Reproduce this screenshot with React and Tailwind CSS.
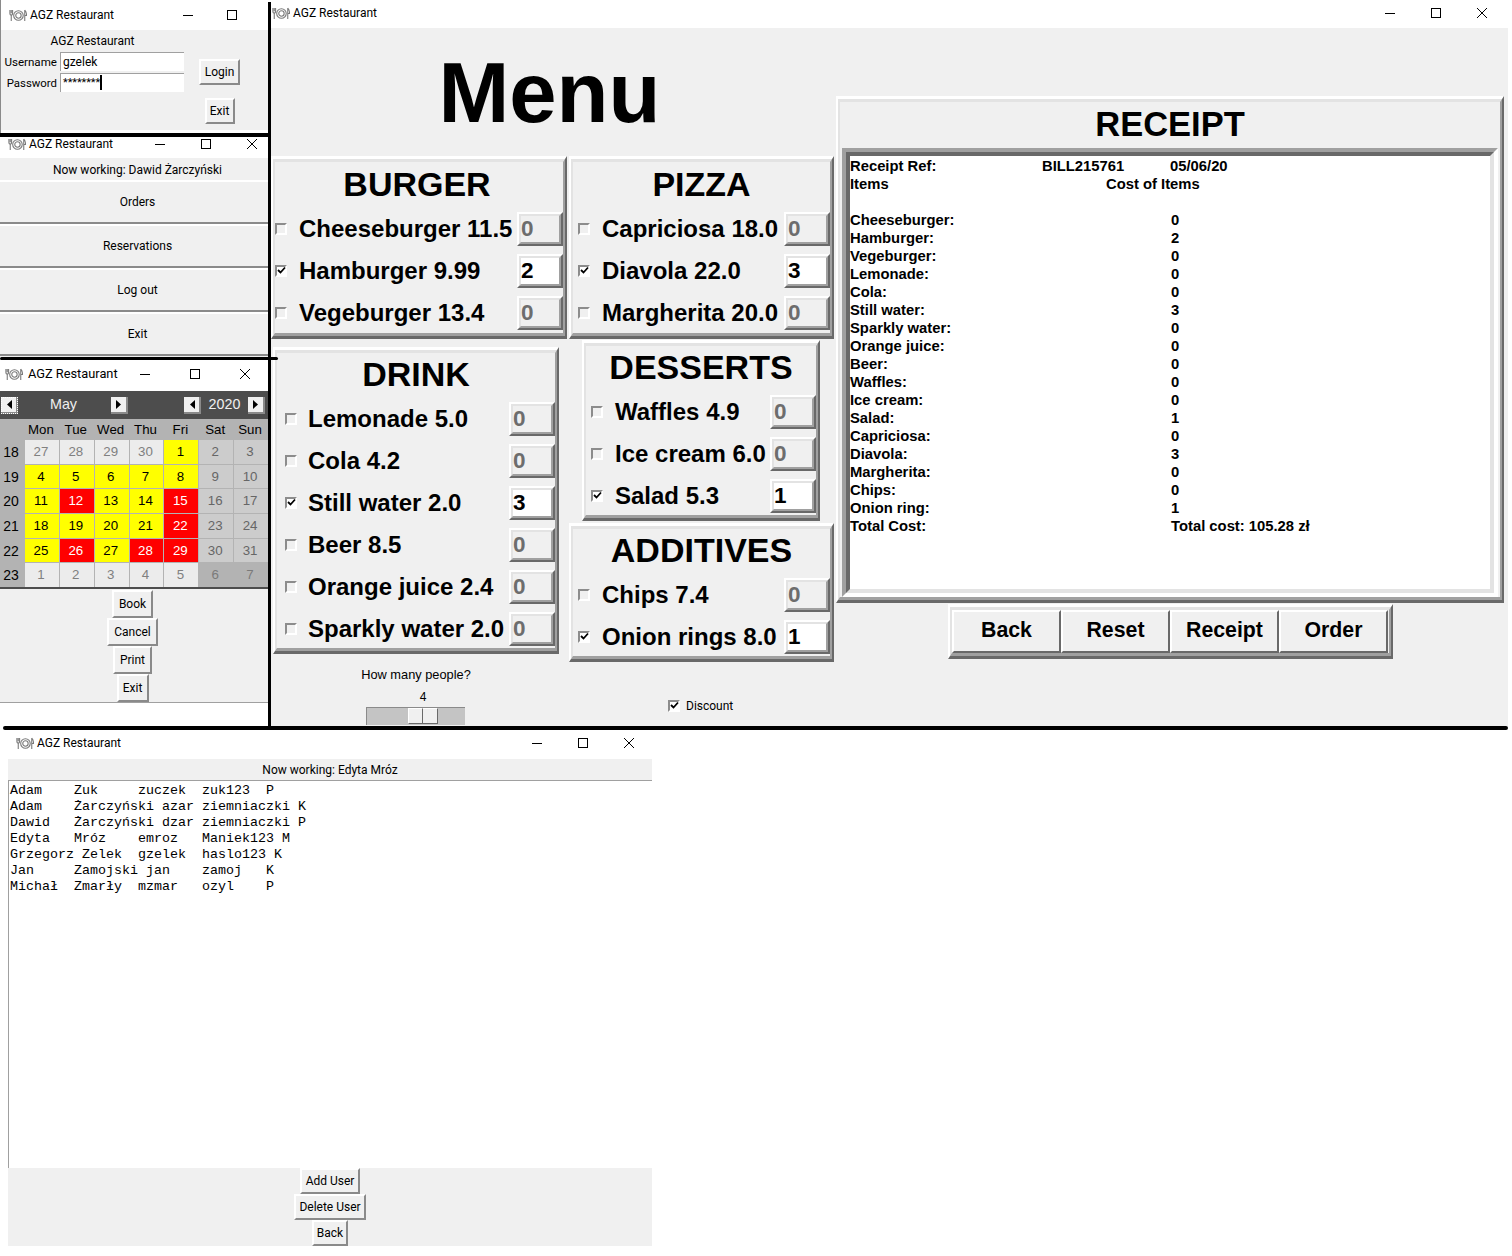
import React from 'react';

const arial = "font-['Liberation_Sans',Arial,sans-serif]";

const DishIcon = () => (
  <svg width="18" height="13" viewBox="0 0 20 14" fill="none" stroke="#7a7a7a" strokeWidth="1.2" className="shrink-0">
    <path d="M1 1v3.5q0 2 1.5 2V13M2.5 1v3.5M4 1v3.5q0 2-1.5 2" />
    <circle cx="10.5" cy="7" r="5.3" />
    <circle cx="10.5" cy="7" r="3" />
    <path d="M17.5 1v12M17.5 1q2 2 2 6h-2" />
  </svg>
);

const MinIcon = () => (
  <svg width="10" height="10" viewBox="0 0 10 10" stroke="#000" strokeWidth="1"><path d="M0 5.5h10" /></svg>
);
const MaxIcon = () => (
  <svg width="10" height="10" viewBox="0 0 10 10" fill="none" stroke="#000" strokeWidth="1"><rect x="0.5" y="0.5" width="9" height="9" /></svg>
);
const CloseIcon = () => (
  <svg width="10" height="10" viewBox="0 0 10 10" stroke="#000" strokeWidth="1"><path d="M0 0l10 10M10 0L0 10" /></svg>
);

const TitleBar = ({ className, controlsClass, btnClass, textClass = 'ml-[3px]' }) => (
  <div className={`flex items-center bg-white shrink-0 ${className}`}>
    <DishIcon />
    <span className={`whitespace-nowrap ${textClass}`}>AGZ Restaurant</span>
    <div className={`ml-auto flex shrink-0 ${controlsClass}`}>
      <div className={`flex justify-center shrink-0 ${btnClass}`}><MinIcon /></div>
      <div className={`flex justify-center shrink-0 ${btnClass}`}><MaxIcon /></div>
      <div className={`flex justify-center shrink-0 ${btnClass}`}><CloseIcon /></div>
    </div>
  </div>
);

const SmallBtn = ({ className, children }) => (
  <div className={`flex items-center justify-center bg-[#f0f0f0] border-2 border-t-white border-l-white border-r-[#8a8a8a] border-b-[#8a8a8a] shrink-0 ${className}`}>
    {children}
  </div>
);

// tk style raised border, two tones on each side
const Frame = ({ className, innerClass, children }) => (
  <div className={`border-x-2 border-y-[3px] border-t-white border-l-white border-r-[#696969] border-b-[#696969] ${className}`}>
    <div className={`border-x-2 border-y-[3px] border-t-[#e3e3e3] border-l-[#e3e3e3] border-r-[#a0a0a0] border-b-[#a0a0a0] bg-[#f0f0f0] ${innerClass}`}>
      {children}
    </div>
  </div>
);

const Check = ({ checked, className }) => (
  <div className={`w-[12px] h-[12px] mb-px shrink-0 border-2 border-t-[#8c8c8c] border-l-[#8c8c8c] border-r-white border-b-white flex items-center justify-center ${checked ? 'bg-white' : 'bg-[#f0f0f0]'} ${className}`}>
    {checked && (
      <svg width="9" height="9" viewBox="0 0 9 9" fill="none" stroke="#000" strokeWidth="1.8" className="shrink-0"><path d="M1 4l2.5 2.5L8 1.5" /></svg>
    )}
  </div>
);

const Entry = ({ value }) => (
  <div className="ml-auto w-[46px] h-[34px] shrink-0 border-2 border-t-white border-l-white border-r-[#696969] border-b-[#696969]">
    <div className={`h-full border-2 border-t-[#e3e3e3] border-l-[#e3e3e3] border-r-[#a0a0a0] border-b-[#a0a0a0] flex items-center text-[22.5px] font-bold ${value > 0 ? 'bg-white text-black' : 'bg-[#f0f0f0] text-[#6d6d6d]'}`}>
      {value}
    </div>
  </div>
);

const MenuGroup = ({ title, items, className, innerClass, titleClass = 'h-[49px] pb-[8px]', checkClass, labelClass }) => (
  <Frame className={className} innerClass={innerClass}>
    <div className={`flex items-center justify-center text-[34px] leading-none font-bold ${titleClass}`}>{title}</div>
    <div className="flex flex-col gap-2">
      {items.map(([label, value]) => (
        <div key={label} className="flex items-center h-[34px]">
          <Check checked={value > 0} className={checkClass} />
          <span className={`text-[24px] font-bold whitespace-nowrap ${labelClass}`}>{label}</span>
          <Entry value={value} />
        </div>
      ))}
    </div>
  </Frame>
);

const receiptRows = [
  ['Cheeseburger:', '0'], ['Hamburger:', '2'], ['Vegeburger:', '0'], ['Lemonade:', '0'], ['Cola:', '0'],
  ['Still water:', '3'], ['Sparkly water:', '0'], ['Orange juice:', '0'], ['Beer:', '0'], ['Waffles:', '0'],
  ['Ice cream:', '0'], ['Salad:', '1'], ['Capriciosa:', '0'], ['Diavola:', '3'], ['Margherita:', '0'],
  ['Chips:', '0'], ['Onion ring:', '1'], ['Total Cost:', 'Total cost: 105.28 zł'],
];

const LoginWindow = () => (
  <div className="absolute left-0 top-0 w-[268px] h-[133px] overflow-hidden flex flex-col bg-white border-l border-[#8a8a8a]">
    <TitleBar className="h-[30px] pl-[8px]" controlsClass="mr-[-30px]" btnClass="w-[44px]" />
    <div className="h-[100px] bg-[#f0f0f0] flex">
      <div className="w-[183px]">
        <div className="h-[22px] flex items-center justify-center">AGZ Restaurant</div>
        <div className="flex items-start h-[21px]">
          <span className="w-[56px] text-right text-[11.6px] leading-[20px]">Username</span>
          <div className="ml-[3px] w-[124px] h-[19px] bg-white border-t border-l border-[#a0a0a0] pl-[2px] leading-[19px]">gzelek</div>
        </div>
        <div className="flex items-start h-[21px]">
          <span className="w-[56px] text-right text-[11.4px] leading-[20px]">Password</span>
          <div className="ml-[3px] w-[124px] h-[19px] bg-white border-t border-l border-[#a0a0a0] pl-[2px] leading-[17px] flex items-start">
            <span className="text-[11px] tracking-[-0.1px]">********</span>
            <span className="mt-px w-[2px] h-[15px] bg-black"></span>
          </div>
        </div>
      </div>
      <div className="ml-[15px] flex flex-col items-center pt-[29px] gap-[13px]">
        <SmallBtn className="w-[41px] h-[26px]">Login</SmallBtn>
        <SmallBtn className="w-[30px] h-[26px]">Exit</SmallBtn>
      </div>
    </div>
  </div>
);

const MainWindow = () => (
  <div className="absolute left-0 top-[130px] w-[275px] h-[227px] overflow-hidden flex flex-col bg-[#f0f0f0]">
    <TitleBar className="h-[28px] pl-[8px]" btnClass="w-[46px]" />
    <div className="h-[22px] shrink-0 pt-px flex items-center justify-center">Now working: Dawid Żarczyński</div>
    {['Orders', 'Reservations', 'Log out', 'Exit'].map((t) => (
      <div key={t} className="h-[44px] shrink-0 flex items-center justify-center border-t-2 border-b-2 border-t-white border-b-[#8a8a8a]">{t}</div>
    ))}
  </div>
);

const Arrow = ({ dir, className }) => (
  <div className={`w-[17px] h-[17px] shrink-0 bg-[#f0f0f0] border-b-2 border-r-2 border-[#8a8a8a] flex items-center justify-center ${className}`}>
    <svg width="6" height="9" viewBox="0 0 6 9" fill="#000">
      {dir === 'left' ? <path d="M6 0v9L1 4.5z" /> : <path d="M0 0v9l5-4.5z" />}
    </svg>
  </div>
);

const O = 'bg-[#ececec] text-[#808080]';
const OW = 'bg-[#b3b3b3] text-[#7a7a7a]';
const W = 'bg-[#cccccc] text-[#666666]';
const Y = 'bg-[#ffff00] text-black';
const R = 'bg-[#ff0000] text-white';

const weeks = [
  [18, [['27', O], ['28', O], ['29', O], ['30', O], ['1', Y], ['2', W], ['3', W]]],
  [19, [['4', Y], ['5', Y], ['6', Y], ['7', Y], ['8', Y], ['9', W], ['10', W]]],
  [20, [['11', Y], ['12', R], ['13', Y], ['14', Y], ['15', R], ['16', W], ['17', W]]],
  [21, [['18', Y], ['19', Y], ['20', Y], ['21', Y], ['22', R], ['23', W], ['24', W]]],
  [22, [['25', Y], ['26', R], ['27', Y], ['28', R], ['29', R], ['30', W], ['31', W]]],
  [23, [['1', O], ['2', O], ['3', O], ['4', O], ['5', O], ['6', OW], ['7', OW]]],
];

const CalendarWindow = () => (
  <div className="absolute left-0 top-[360px] w-[268px] h-[366px] overflow-hidden flex flex-col bg-white">
    <TitleBar className="h-[31px] pb-[3px] pl-[5px] text-[12.8px]" textClass="ml-[5px]" controlsClass="mr-[-2px]" btnClass="w-[50px]" />
    <div className={`${arial} text-[13.3px]`}>
      <div className="h-[28px] bg-[#4d4d4d] flex items-center pl-px text-[14.3px] text-[#f0f0f0]">
        <Arrow dir="left" className="outline-1 outline-dotted outline-white -outline-offset-1" />
        <div className="w-[93px] text-center pr-[2px]">May</div>
        <Arrow dir="right" />
        <Arrow dir="left" className="ml-[56px]" />
        <div className="w-[47px] text-center">2020</div>
        <Arrow dir="right" />
      </div>
      <div className="grid grid-cols-[24px_repeat(7,1fr)] gap-x-px h-[21px] bg-[#b3b3b3] items-center text-black text-center">
        <span></span>
        {['Mon', 'Tue', 'Wed', 'Thu', 'Fri', 'Sat', 'Sun'].map((d) => <span key={d} className="pr-[2px]">{d}</span>)}
      </div>
      <div className="grid grid-cols-[24px_repeat(7,1fr)] auto-rows-[23.67px] gap-px bg-[#b3b3b3] text-center leading-[24px]">
        {weeks.map(([num, days]) => (
          <React.Fragment key={num}>
            <div className="text-black text-[14px] pr-[2px]">{num}</div>
            {days.map(([d, cls], i) => <div key={i} className={`pr-[2px] ${cls}`}>{d}</div>)}
          </React.Fragment>
        ))}
      </div>
    </div>
    <div className="h-[2px] shrink-0 bg-[#4d4d4d]"></div>
    <div className="bg-[#f0f0f0] flex flex-col items-center pt-px pr-[3px] border-b border-[#a0a0a0]">
      <SmallBtn className="w-[41px] h-[28px]">Book</SmallBtn>
      <SmallBtn className="w-[51px] h-[28px]">Cancel</SmallBtn>
      <SmallBtn className="w-[39px] h-[28px]">Print</SmallBtn>
      <SmallBtn className="w-[32px] h-[28px]">Exit</SmallBtn>
    </div>
  </div>
);

const MenuWindow = () => (
  <div className="absolute left-[271px] top-0 w-[1237px] h-[726px] overflow-hidden flex flex-col bg-[#f0f0f0]">
    <TitleBar className="h-[28px] pb-[2px] pl-[1px]" controlsClass="mr-[3px]" btnClass="w-[46px]" />
    <div className={`flex ${arial} text-black`}>
      <div className="w-[565px] shrink-0">
        <div className="h-[128px] flex items-center justify-center pr-[8px] text-[85px] font-bold leading-none">Menu</div>
        <div className="flex">
          <div className="w-[298px] shrink-0">
            <MenuGroup
              title="BURGER"
              className="w-[296px]"
              innerClass="pb-[3px]"
              titleClass="h-[50px] pb-[6px] pr-[4px]"
              labelClass="ml-[12px]"
              items={[['Cheeseburger 11.5', 0], ['Hamburger 9.99', 2], ['Vegeburger 13.4', 0]]}
            />
            <MenuGroup
              title="DRINK"
              className="w-[286px] ml-[2px] mt-[8px]"
              innerClass="pb-[2px]"
              checkClass="ml-[8px]"
              labelClass="ml-[11px]"
              items={[['Lemonade 5.0', 0], ['Cola 4.2', 0], ['Still water 2.0', 3], ['Beer 8.5', 0], ['Orange juice 2.4', 0], ['Sparkly water 2.0', 0]]}
            />
            <div className="w-[286px] ml-[2px] flex flex-col items-center font-normal">
              <div className="mt-[13px] h-[16px] leading-[16px] text-[12.8px]">How many people?</div>
              <div className="mt-[6px] h-[16px] leading-[16px] pl-[14px] text-[12px]">4</div>
              <div className="mt-[2px] mr-[2px] w-[99px] h-[18px] bg-[#c4c4c4] border-t border-l border-[#8a8a8a] pl-[41px] flex">
                <div className="w-[15px] h-[16px] bg-[#f0f0f0] border-t border-l border-white border-r border-r-[#696969] border-b border-b-[#696969]"></div>
                <div className="w-[15px] h-[16px] bg-[#f0f0f0] border-t border-white border-r border-r-[#696969] border-b border-b-[#696969]"></div>
              </div>
            </div>
          </div>
          <div className="w-[265px] shrink-0">
            <MenuGroup
              title="PIZZA"
              className="w-[265px]"
              innerClass="pb-[3px]"
              titleClass="h-[50px] pb-[6px]"
              checkClass="ml-[5px]"
              labelClass="ml-[12px]"
              items={[['Capriciosa 18.0', 0], ['Diavola 22.0', 3], ['Margherita 20.0', 0]]}
            />
            <MenuGroup
              title="DESSERTS"
              className="w-[238px] ml-[13px] mt-[1px]"
              innerClass="pb-[2px]"
              checkClass="ml-[5px]"
              labelClass="ml-[12px]"
              items={[['Waffles 4.9', 0], ['Ice cream 6.0', 0], ['Salad 5.3', 1]]}
            />
            <MenuGroup
              title="ADDITIVES"
              className="w-[265px] mt-[2px]"
              innerClass="pb-[2px]"
              checkClass="ml-[5px]"
              labelClass="ml-[12px]"
              items={[['Chips 7.4', 0], ['Onion rings 8.0', 1]]}
            />
            <div className="mt-[35px] ml-[99px] flex items-center font-['Roboto',sans-serif] text-[12px]">
              <Check checked />
              <span className="ml-[6px]">Discount</span>
            </div>
          </div>
        </div>
      </div>
      <div className="w-[668px] shrink-0 mt-[68px]">
        <Frame innerClass="px-[2px]">
          <div className="h-[46px] pb-[2px] flex items-center justify-center text-[34.5px] font-bold leading-none">RECEIPT</div>
          <div className="h-[449px] border-4 border-t-[#a0a0a0] border-l-[#a0a0a0] border-r-white border-b-white">
            <div className="h-full border-4 border-t-[#696969] border-l-[#696969] border-r-[#e3e3e3] border-b-[#e3e3e3] bg-white text-[14.8px] font-bold leading-[18px] pt-px">
              <div className="flex">
                <span className="w-[192px]">Receipt Ref:</span>
                <span className="w-[128px]">BILL215761</span>
                <span>05/06/20</span>
              </div>
              <div className="flex">
                <span className="w-[256px]">Items</span>
                <span>Cost of Items</span>
              </div>
              <div className="h-[18px]"></div>
              {receiptRows.map(([label, value]) => (
                <div key={label} className="flex">
                  <span className="w-[321px]">{label}</span>
                  <span>{value}</span>
                </div>
              ))}
            </div>
          </div>
        </Frame>
        <Frame className="w-[445px] ml-[112px] mt-px" innerClass="flex">
          {['Back', 'Reset', 'Receipt', 'Order'].map((t) => (
            <div key={t} className="w-[109px] h-[43px] pb-[2px] shrink-0 flex items-center justify-center text-[21.3px] font-bold border-2 border-t-white border-l-white border-r-[#696969] border-b-[#696969]">
              {t}
            </div>
          ))}
        </Frame>
      </div>
    </div>
  </div>
);

const users = `Adam    Zuk     zuczek  zuk123  P
Adam    Żarczyński azar ziemniaczki K
Dawid   Żarczyński dzar ziemniaczki P
Edyta   Mróz    emroz   Maniek123 M
Grzegorz Zelek  gzelek  haslo123 K
Jan     Zamojski jan    zamoj   K
Michał  Zmarły  mzmar   ozyl    P`;

const UsersWindow = () => (
  <div className="absolute left-[8px] top-[730px] w-[644px] h-[516px] overflow-hidden flex flex-col bg-white">
    <TitleBar className="h-[29px] pb-[3px] pl-[8px]" controlsClass="mr-0" btnClass="w-[46px]" />
    <div className="h-[22px] shrink-0 bg-[#f0f0f0] border-b border-[#a0a0a0] flex items-center justify-center">Now working: Edyta Mróz</div>
    <pre className="h-[387px] shrink-0 border-l border-[#a0a0a0] pl-px pt-[2px] font-['Liberation_Mono','Courier_New',monospace] text-[13.33px] leading-[16px] text-black">{users}</pre>
    <div className="bg-[#f0f0f0] flex flex-col items-center">
      <SmallBtn className="w-[60px] h-[26px]">Add User</SmallBtn>
      <SmallBtn className="w-[72px] h-[26px]">Delete User</SmallBtn>
      <SmallBtn className="w-[36px] h-[26px]">Back</SmallBtn>
    </div>
  </div>
);

export default function App() {
  return (
    <div className="relative w-[1512px] h-[1256px] bg-white overflow-hidden font-['Roboto',sans-serif] text-[12px] text-black">
      <MainWindow />
      <LoginWindow />
      <CalendarWindow />
      <MenuWindow />
      <UsersWindow />
      {/* black strokes that split the collage */}
      <div className="absolute left-[268px] top-[2px] w-[3px] h-[724px] bg-black"></div>
      <div className="absolute left-0 top-[133px] w-[270px] h-[4px] bg-black"></div>
      <div className="absolute left-0 top-[357px] w-[278px] h-[3px] rounded-full bg-black"></div>
      <div className="absolute left-[3px] top-[726px] w-[1505px] h-[4px] rounded-full bg-black"></div>
    </div>
  );
}
